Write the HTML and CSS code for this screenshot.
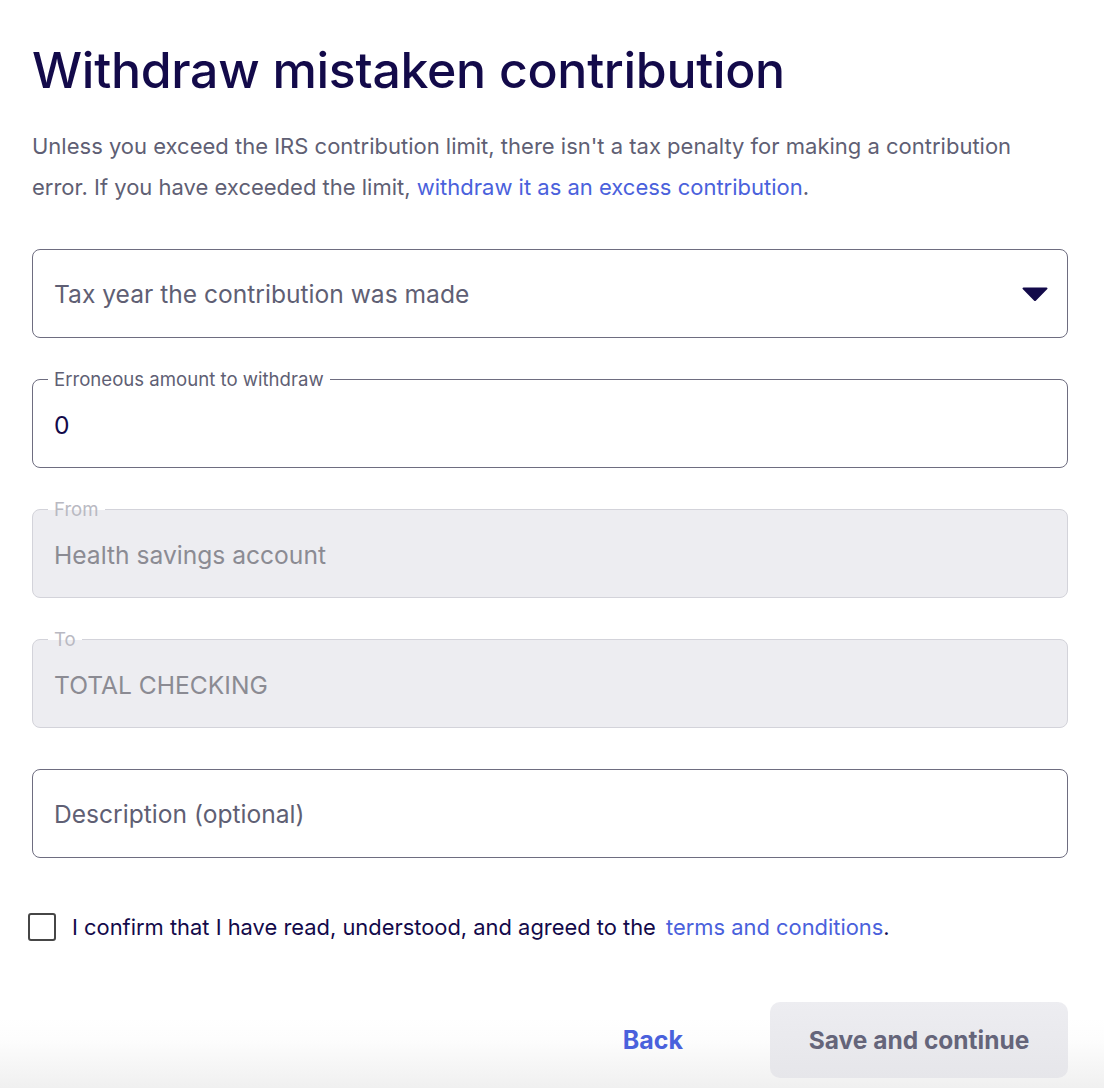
FILE: index.html
```html
<!DOCTYPE html>
<html lang="en">
<head>
<meta charset="utf-8">
<title>Withdraw mistaken contribution</title>
<link rel="stylesheet" href="styles.css">
</head>
<body>
<main class="page">
  <h1 class="title">Withdraw mistaken contribution</h1>
  <p class="intro">Unless you exceed the IRS contribution limit, there isn't a tax penalty for making a contribution<br>error. If you have exceeded the limit, <a class="link" href="#">withdraw it as an excess contribution</a>.</p>

  <div class="fields">
    <div class="field">
      <span class="placeholder">Tax year the contribution was made</span>
      <svg class="caret" width="26" height="16" viewBox="0 0 26 16" aria-hidden="true"><path d="M1.5 1.5h23a1 1 0 0 1 .8 1.6l-11.5 11.6a1.2 1.2 0 0 1-1.6 0L.7 3.1A1 1 0 0 1 1.5 1.5z" fill="#130a4a"/></svg>
    </div>
    <div class="field">
      <span class="label">Erroneous amount to withdraw</span>
      <span class="value">0</span>
    </div>
    <div class="field disabled">
      <span class="label">From</span>
      <span class="value">Health savings account</span>
    </div>
    <div class="field disabled">
      <span class="label">To</span>
      <span class="value">TOTAL CHECKING</span>
    </div>
    <div class="field">
      <span class="placeholder">Description (optional)</span>
    </div>
  </div>

  <label class="confirm">
    <span class="checkbox"></span>
    <span class="confirm-text">I confirm that I have read, understood, and agreed to the <a class="link terms" href="#">terms and conditions</a>.</span>
  </label>
</main>
<footer class="footer">
  <a class="back" href="#">Back</a>
  <button class="save" type="button">Save and continue</button>
</footer>
</body>
</html>
```
FILE: styles.css
```css
* { box-sizing: border-box; }
html, body { margin: 0; padding: 0; background: #fff; }
body {
  font-family: Inter, "Noto Sans", sans-serif;
  color: #130a4a;
  width: 1104px;
  height: 1088px;
  display: flex;
  flex-direction: column;
}
.page {
  flex: 1;
  padding: 38px 36px 0 32px;
}
.title {
  margin: 0;
  font-size: 50px;
  font-weight: 500;
  line-height: 64px;
  letter-spacing: -0.3px;
  color: #130a4a;
}
.intro {
  margin: 24px 0 0;
  font-size: 22px;
  line-height: 41px;
  color: #5f5f74;
}
.link { color: #4a61dc; text-decoration: none; }
.fields {
  margin-top: 41px;
  display: flex;
  flex-direction: column;
  gap: 41px;
}
.field {
  position: relative;
  height: 89px;
  border: 1px solid #6e6d80;
  border-radius: 8px;
  padding: 0 21px;
  display: flex;
  align-items: center;
  justify-content: space-between;
  background: #fff;
}
.placeholder, .value {
  font-size: 24.6px;
  color: #5f5f74;
}
.value { color: #130a4a; padding-top: 2px; }
.caret { margin-right: -2px; }
.label {
  position: absolute;
  left: 15px;
  top: -12px;
  padding: 0 6px;
  font-size: 18.6px;
  line-height: 22px;
  color: #5f5f74;
  background: #fff;
}
.field.disabled {
  background: #ededf1;
  border-color: #d3d3da;
}
.field.disabled .label {
  color: #b9b9c2;
  background: linear-gradient(#fff 55%, #ededf1 55%);
}
.field.disabled .value { color: #8b8b93; }
.confirm {
  margin-top: 55px;
  margin-left: -4px;
  display: flex;
  align-items: center;
  gap: 16px;
  font-size: 21.9px;
  color: #130a4a;
}
.checkbox {
  width: 28px;
  height: 28px;
  border: 2.5px solid #464646;
  border-radius: 3px;
  flex: none;
}
.terms { margin-left: 4px; }
.footer {
  height: 108px;
  padding: 22px 36px 10px 32px;
  display: flex;
  justify-content: flex-end;
  align-items: flex-start;
  gap: 87px;
  background: linear-gradient(#fff 35%, #fdfdfd 55%, #f0f0f0 100%);
}
.back {
  height: 76px;
  display: flex;
  align-items: center;
  font-size: 25px;
  font-weight: 700;
  color: #4a61dc;
  text-decoration: none;
}
.save {
  width: 298px;
  height: 76px;
  border: none;
  border-radius: 10px;
  background: linear-gradient(#ededf1, #e6e6ea);
  font-family: inherit;
  font-size: 24.5px;
  font-weight: 700;
  color: #65657a;
}
```
